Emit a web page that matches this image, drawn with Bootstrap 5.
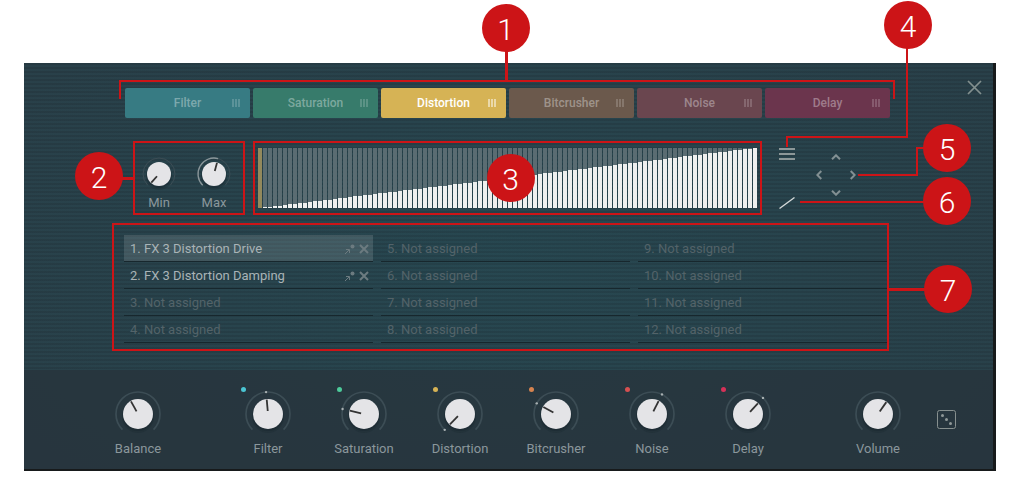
<!DOCTYPE html>
<html lang="en">
<head>
<meta charset="utf-8">
<meta name="viewport" content="width=device-width, initial-scale=1">
<title>Macro control editor</title>
<link rel="stylesheet" href="https://cdn.jsdelivr.net/npm/bootstrap@5.3.0/dist/css/bootstrap.min.css">
<style>
:root { --call: #cc1417; }
body { font-family: Roboto, "Liberation Sans", sans-serif; font-size: 13px; line-height: 16px; background: #fff; }
button { background: none; border: 0; padding: 0; display: block; }
svg { display: block; }
.figure-pad { padding: 63px 23px 10px 24px; }
.device { border-right: 3px solid #171a1b; border-bottom: 2px solid #171a1b;
  background: radial-gradient(ellipse 60% 75% at 50% 50%, #27464f, #293e47); }
.editor { height: 307px; padding-top: 17px;
  background: repeating-linear-gradient(rgba(16,28,34,.12) 0 2px, rgba(40,90,100,.08) 2px 4px); }
.side-l { width: 101px; flex: none; }
.side-r { width: 103px; flex: none; padding-left: 77px; }

.fx-tab { flex: 1 1 0; height: 30px; border-radius: 2px; color: rgba(255,255,255,.36); font-size: 12px; font-weight: 500; position: relative; }
.fx-tab.on { color: #fff; }
.grip { position: absolute; right: 10px; top: 11px; width: 8px; height: 8px; opacity: .5;
  background: repeating-linear-gradient(90deg, currentColor 0 2px, transparent 2px 3px); }

.framed { border: 2px solid var(--call); position: relative; }
.range-box { width: 112px; padding: 14px 5px 0 0; }
.small-knob { width: 48px; }
.knob { position: relative; display: block; text-align: center; color: #8b979c; }
.knob input { position: absolute; inset: 0; width: 100%; height: 100%; margin: 0; opacity: 0; }
.knob svg { margin: 0 auto; overflow: visible; }
.steps { height: 60px; gap: 1px; margin: 5px 3px; }
.step-cell { flex: 1 1 0; background: #5a6c72; }
.step-cell > i { display: block; width: 100%; background: #eeefee; }
.step-cell.now { background: #93895c; }
.tools { width: 231px; flex: none; position: relative; padding: 7px 0 6px 17px; }
.pad-grid { display: grid; grid-template-columns: 12px 22px 12px; grid-template-rows: 12px 24px 12px; align-items: center; justify-items: center; margin: 3px 0 0 18px; }

.slots { margin: 8px 104px 0 88px; padding: 10px 0 6px 10px; }
.slots ol { display: grid; grid-template-columns: repeat(3, 1fr); grid-template-rows: repeat(4, 27px); grid-auto-flow: column; column-gap: 8px; margin: 0; padding: 0; list-style: none; }
.slots li { display: flex; align-items: center; border-bottom: 1px solid #17272d; padding: 2px 4px 0 6px; color: #536369; }
.slots li.used { color: #a9b3b6; }
.slots li.sel { background: rgba(255,255,255,.13); background-clip: padding-box; }
.slots svg { color: #6c7b80; }

.macro-bar { height: 99px; padding: 19px 37px 0 66px; background: rgba(39,48,56,.62); }
.macro { width: 96px; }
.led { position: absolute; left: 21px; top: -2px; width: 5px; height: 5px; border-radius: 50%; }
.dice { margin: 21px 0 0 11px; }

.mark-no { position: absolute; width: 48px; height: 48px; border-radius: 50%; background: var(--call); color: #fff; font-size: 30px; font-weight: 300; line-height: 52px; text-align: center; z-index: 2; }
.wire { position: absolute; border: 0 solid var(--call); pointer-events: none; z-index: 1; }
.bracket { left: -6px; right: -5px; top: -8px; height: 19px; border-width: 2px 2px 0; }
.w1 { left: 50%; top: -60px; height: 52px; margin-left: -3px; border-left-width: 3px; }
.n1 { left: 50%; top: -84px; margin-left: -26px; }
.w2 { right: 100%; top: 34px; width: 14px; border-top-width: 3px; }
.n2 { left: -60px; top: 9px; }
.n3 { left: 50%; top: 11px; margin-left: -21px; }
.w4a { left: 24px; top: -5px; width: 122px; height: 11px; border-width: 2px 0 0 2px; }
.w4b { left: 144px; top: -94px; height: 89px; border-left-width: 2px; }
.n4 { left: 122px; top: -140px; }
.w5a { left: 96px; top: 6px; width: 60px; height: 29px; border-width: 0 2px 2px 0; }
.w5b { left: 154px; top: 6px; width: 10px; border-top-width: 2px; }
.n5 { left: 161px; top: -17px; }
.w6 { left: 38px; top: 60px; width: 126px; border-top-width: 2px; }
.n6 { left: 161px; top: 36px; }
.w7 { left: 100%; top: 63px; width: 38px; border-top-width: 3px; }
.n7 { right: -85px; top: 40px; }
</style>
</head>
<body>
<main class="figure-pad">
<div class="device">
  <section class="editor">
    <div class="d-flex align-items-start">
      <div class="side-l"></div>
      <nav class="d-flex flex-fill position-relative mt-2" style="gap:3px" id="tabs" aria-label="Effects">
        <span class="wire bracket"></span><span class="wire w1"></span><span class="mark-no n1">1</span>
      </nav>
      <div class="side-r"><button aria-label="Close"><svg width="15" height="15" viewBox="0 0 15 15" stroke="#83908f" stroke-width="1.7"><path d="M1 1l13 13M14 1L1 14"/></svg></button></div>
    </div>

    <div class="d-flex" style="margin:23px 0 0 109px">
      <div class="framed range-box d-flex justify-content-between me-2" id="range">
        <span class="wire w2"></span><span class="mark-no n2">2</span>
      </div>
      <div class="framed flex-fill">
        <div class="steps d-flex" id="steps" role="img" aria-label="Modulation curve, rising from minimum to maximum"></div>
        <span class="mark-no n3">3</span>
      </div>
      <div class="tools d-flex">
        <div class="d-flex flex-column justify-content-between">
          <button aria-label="Menu"><svg width="16" height="12" fill="#8c9798"><path d="M0 0h16v2H0zM0 5h16v2H0zM0 10h16v2H0z"/></svg></button>
          <button aria-label="Line shape"><svg width="16" height="12" stroke="#d5dada" stroke-width="1.3"><path d="M.5 11.5l15-11"/></svg></button>
        </div>
        <div class="pad-grid">
          <span></span><button aria-label="Up"><svg width="10" height="6" fill="none" stroke="#839093" stroke-width="2"><path d="M1 5.3l4-4 4 4"/></svg></button><span></span>
          <button aria-label="Left"><svg width="6" height="10" fill="none" stroke="#839093" stroke-width="2"><path d="M5.3 1l-4 4 4 4"/></svg></button><span></span><button aria-label="Right"><svg width="6" height="10" fill="none" stroke="#839093" stroke-width="2"><path d="M.7 1l4 4-4 4"/></svg></button>
          <span></span><button aria-label="Down"><svg width="10" height="6" fill="none" stroke="#839093" stroke-width="2"><path d="M1 .7l4 4 4-4"/></svg></button><span></span>
        </div>
        <span class="wire w4a"></span><span class="wire w4b"></span><span class="mark-no n4">4</span>
        <span class="wire w5a"></span><span class="wire w5b"></span><span class="mark-no n5">5</span>
        <span class="wire w6"></span><span class="mark-no n6">6</span>
      </div>
    </div>

    <div class="framed slots">
      <ol id="slots"></ol>
      <span class="wire w7"></span><span class="mark-no n7">7</span>
    </div>
  </section>

  <footer class="macro-bar d-flex align-items-start">
    <div class="d-flex flex-fill justify-content-between">
      <div id="bal"></div>
      <div class="d-flex" id="macros"></div>
      <div id="vol"></div>
    </div>
    <button class="dice" aria-label="Randomize"><svg width="19" height="19" fill="none" stroke="#87908f"><rect x=".5" y=".5" width="18" height="18" rx="2"/><g fill="#8f9898" stroke="none"><circle cx="5.5" cy="5.5" r="1.5"/><circle cx="9.5" cy="9.5" r="1.5"/><circle cx="13.5" cy="13.5" r="1.5"/></g></svg></button>
  </footer>
</div>
</main>
<script src="https://cdn.jsdelivr.net/npm/bootstrap@5.3.0/dist/js/bootstrap.bundle.min.js"></script>
<script>
const add = (id, html) => document.getElementById(id).insertAdjacentHTML('beforeend', html);
const pt = (r, a) => [r * Math.sin(a * Math.PI / 180), -r * Math.cos(a * Math.PI / 180)].map(v => v.toFixed(2)).join(' ');
const arc = (r, a, b) => `M${pt(r, a)}A${r} ${r} 0 ${b - a > 180 ? 1 : 0} 1 ${pt(r, b)}`;

// angle: pointer direction in degrees, 0 = straight up
function knob(name, angle, o = {}) {
  const r = o.small ? 12 : 15, ring = o.small ? 16 : 22, size = o.small ? 34 : 50;
  return `<label class="knob ${o.small ? 'small-knob' : 'macro'}">
    ${o.led ? `<span class="led" style="background:${o.led}"></span>` : ''}
    <svg width="${size}" height="${size}" viewBox="${-size/2} ${-size/2} ${size} ${size}" fill="none">
      <path d="${arc(ring, -135, 135)}" stroke="#3c4d55" stroke-width="${o.small ? 1 : 1.7}"/>
      ${o.lit ? `<path d="${arc(ring, -135, angle)}" stroke="#89969a" stroke-width="1.3"/>` : ''}
      <circle cy="3" r="${r + 1}" fill="#15222a" opacity=".2"/><circle cy="1.5" r="${r + .5}" fill="#15222a" opacity=".3"/>
      <circle r="${r}" fill="#e4e4e7"/>
      <path d="M${pt(3, angle)}L${pt(r - .5, angle)}" stroke="#333" stroke-width="1.8"/>
      ${o.led ? `<circle r="1.2" fill="#a9b1b3" transform="translate(${pt(ring, angle)})"/>` : ''}
    </svg>
    <span class="d-block ${o.small ? 'mt-1' : ''}" ${o.small ? '' : 'style="padding-top:2px"'}>${name}</span>
    <input type="range" min="-140" max="140" value="${angle}">
  </label>`;
}

[['Filter','#377b83'],['Saturation','#377b6b'],['Distortion','#d6b355'],['Bitcrusher','#6b594c'],['Noise','#6a464f'],['Delay','#6b354d']]
  .forEach(([n, c]) => add('tabs', `<button class="fx-tab${n === 'Distortion' ? ' on' : ''}" style="background:${c}">${n}<span class="grip"></span></button>`));

add('range', knob('Min', -138, {small: 1}) + knob('Max', 15, {small: 1, lit: 1}));

for (let i = 0; i < 100; i++)
  add('steps', i ? `<div class="step-cell d-flex align-items-end"><i style="height:${(i / 99 * 100).toFixed(1)}%"></i></div>` : '<div class="step-cell now"></div>');

const icons = `<button aria-label="Learn"><svg width="11" height="11" fill="none" stroke="currentColor"><path d="M1 10l4-4M2 5.5h3.5V9"/><circle cx="8.5" cy="2.5" r="2" fill="currentColor" stroke="none"/></svg></button>
  <button class="ms-1" aria-label="Remove"><svg width="10" height="10" stroke="currentColor" stroke-width="2"><path d="M1 1l8 8M9 1L1 9"/></svg></button>`;
for (let i = 1; i <= 12; i++) {
  const t = ['FX 3 Distortion Drive', 'FX 3 Distortion Damping'][i - 1];
  add('slots', `<li class="${t ? 'used' : ''}${i === 1 ? ' sel' : ''}"><span class="me-auto">${i}. ${t || 'Not assigned'}</span>${t ? icons : ''}</li>`);
}

add('bal', knob('Balance', -29));
[['Filter',-5,'#4bc5d3'],['Saturation',-77,'#4dcb9b'],['Distortion',-136,'#d6b355'],['Bitcrusher',-61,'#d6834f'],['Noise',27,'#d65051'],['Delay',43,'#d63158']]
  .forEach(([n, a, c]) => add('macros', knob(n, a, {led: c})));
add('vol', knob('Volume', 35));
</script>
</body>
</html>
